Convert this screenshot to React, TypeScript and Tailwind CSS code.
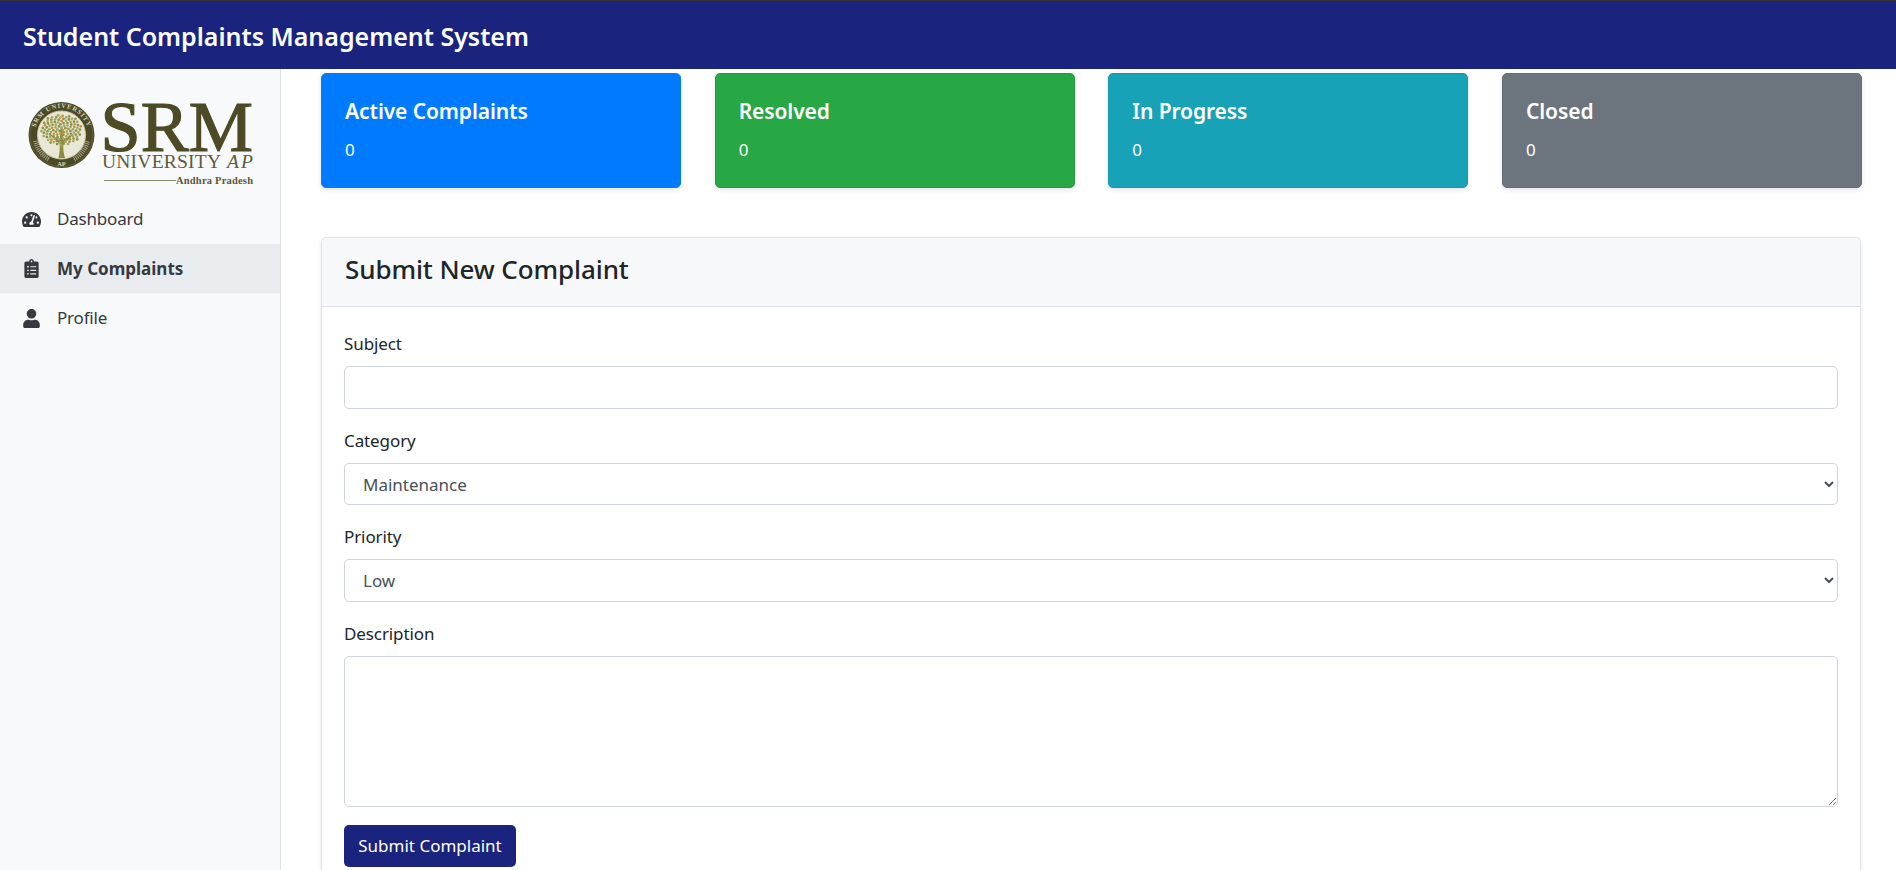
import { FaTachometerAlt, FaClipboardList, FaUser } from "react-icons/fa";

const font = "font-['Noto_Sans',sans-serif]";

function Logo() {
  const leaves: [number, number, string][] = [];
  for (let i = 0; i < 110; i++) {
    const a = i * 2.39996;
    const s = Math.sqrt((i + 0.5) / 110);
    leaves.push([
      61.5 + 20.5 * s * Math.cos(a),
      130 + 15.5 * s * Math.sin(a),
      i % 11 === 3 ? "#d08a2e" : i % 2 ? "#8d9147" : "#a3a75f",
    ]);
  }
  return (
    <svg width="280" height="107" viewBox="0 87 280 107" className="block">
      <defs>
        <path id="arcTop" d="M 34.5 135 A 27 27 0 0 1 88.5 135" />
      </defs>
      <circle cx="61.5" cy="135" r="33" fill="#4c4925" />
      <circle cx="61.5" cy="135" r="31.5" fill="none" stroke="#6d6a45" strokeWidth="0.7" />
      <circle cx="61.5" cy="135" r="24" fill="#e9e7d6" stroke="#c9c7a8" strokeWidth="1" />
      <path d="M 35.5 141 A 27 27 0 0 0 49 159" fill="none" stroke="#b9b79e" strokeWidth="5" strokeDasharray="0.8 1.2" />
      <path d="M 74 159 A 27 27 0 0 0 87.5 141" fill="none" stroke="#b9b79e" strokeWidth="5" strokeDasharray="0.8 1.2" />
      <text fontFamily="'Liberation Serif',serif" fontSize="6.5" fontWeight="bold" fill="#d8d6c0" letterSpacing="0.9">
        <textPath href="#arcTop" startOffset="50%" textAnchor="middle">SRM UNIVERSITY</textPath>
      </text>
      <text x="61.5" y="166" textAnchor="middle" fontFamily="'Liberation Serif',serif" fontSize="6.5" fontWeight="bold" fill="#d8d6c0">AP</text>
      <path d="M58.5 158 C59.8 152 60 148 59.5 144 L48 133 L60 140 L60.5 128 L62.5 128 L63 140 L75 133 L63.5 144 C63 148 63.2 152 65 158 Z" fill="#8c8b42" />
      {leaves.map(([x, y, c], i) => (
        <circle key={i} cx={x} cy={y} r="1.35" fill={c} />
      ))}
      <text x="100.5" y="150.5" fontFamily="'Liberation Serif',serif" fontSize="72" fill="#4d4a26" stroke="#4d4a26" strokeWidth="1.2" textLength="152.5" lengthAdjust="spacingAndGlyphs">SRM</text>
      <text x="102" y="168" fontFamily="'Liberation Serif',serif" fontSize="19.5" fill="#5f5c3a" textLength="119">UNIVERSITY</text>
      <text x="227" y="168" fontFamily="'Liberation Serif',serif" fontStyle="italic" fontSize="19.5" fill="#5f5c3a" textLength="26">AP</text>
      <line x1="104" y1="180.5" x2="176" y2="180.5" stroke="#8b8a6a" strokeWidth="1" />
      <text x="176" y="184" fontFamily="'Liberation Serif',serif" fontWeight="bold" fontSize="10.5" fill="#5b5836" textLength="77">Andhra Pradesh</text>
    </svg>
  );
}

function Stat({ title, bg, border }: { title: string; bg: string; border: string }) {
  return (
    <div className={`w-[360px] h-[115px] rounded-[5px] border px-[23px] pt-[22px] shadow-[0_2px_5px_rgba(0,0,0,0.1)] text-white ${bg} ${border}`}>
      <div className="text-[21px] leading-[30px] font-semibold tracking-[-0.1px]">{title}</div>
      <div className="mt-[11px] text-[17px] leading-[26px]">0</div>
    </div>
  );
}

function Field({ label, children, mb }: { label: string; children: React.ReactNode; mb: string }) {
  return (
    <div className={mb}>
      <label className="block text-[17px] leading-[24px] mb-[10px] text-[#212529] tracking-[-0.1px]">{label}</label>
      {children}
    </div>
  );
}

const control = "block w-full rounded-[5px] border border-[#ced4da] bg-white text-[17px] text-[#495057] outline-none";

export default function App() {
  return (
    <div className={`h-[870px] w-[1896px] overflow-hidden bg-white flex flex-col ${font}`}>
      <header className="h-[69px] shrink-0 bg-[#1a237e] border-t border-t-[#333333] flex items-center pl-[23px] pt-[3px]">
        <h1 className="text-[25px] font-semibold text-white">Student Complaints Management System</h1>
      </header>
      <div className="flex flex-1 min-h-0">
        <aside className="w-[281px] shrink-0 bg-[#f8f9fa] border-r border-r-[#dee2e6] pt-[18px]">
          <Logo />
          <nav className="text-[#343a40] text-[17px]">
            <a className="flex items-center h-[50px] pl-[22px]">
              <span className="w-[35px] shrink-0"><FaTachometerAlt className="h-[19px] w-auto text-[#343a40]" /></span>
              <span className="tracking-[-0.2px]">Dashboard</span>
            </a>
            <a className="flex items-center h-[49px] pl-[22px] bg-[#e9ecef] font-bold">
              <span className="w-[35px] shrink-0"><FaClipboardList className="h-[19px] w-auto text-[#343a40]" /></span>
              <span>My Complaints</span>
            </a>
            <a className="flex items-center h-[50px] pl-[22px]">
              <span className="w-[35px] shrink-0"><FaUser className="h-[19px] w-auto text-[#343a40]" /></span>
              <span className="tracking-[-0.2px]">Profile</span>
            </a>
          </nav>
        </aside>
        <main className="flex-1 pl-[40px] pr-[35px] pt-[4px]">
          <div className="flex justify-between mr-[-1px]">
            <Stat title="Active Complaints" bg="bg-[#007bff]" border="border-[#007bff]" />
            <Stat title="Resolved" bg="bg-[#28a745]" border="border-[#239a3e]" />
            <Stat title="In Progress" bg="bg-[#17a2b8]" border="border-[#1596aa]" />
            <Stat title="Closed" bg="bg-[#6c757d]" border="border-[#656e75]" />
          </div>
          <section className="mt-[49px] rounded-[5px] border border-[#dfe1e4] shadow-[0_2px_5px_rgba(0,0,0,0.08)]">
            <div className="h-[69px] bg-[#f7f8fa] border-b border-b-[#dee2e6] flex items-center pl-[23px] pb-[6px] rounded-t-[5px]">
              <h2 className="text-[26px] font-medium text-[#212529] tracking-[-0.1px]">Submit New Complaint</h2>
            </div>
            <form className="px-[22px] pt-[25px] pb-[24px]">
              <Field label="Subject" mb="mb-[20px]">
                <input className={`${control} h-[43px] px-[18px]`} />
              </Field>
              <Field label="Category" mb="mb-[20px]">
                <select className={`${control} h-[42px] px-[14px]`} defaultValue="Maintenance">
                  <option>Maintenance</option>
                </select>
              </Field>
              <Field label="Priority" mb="mb-[20px]">
                <select className={`${control} h-[43px] px-[14px]`} defaultValue="Low">
                  <option>Low</option>
                </select>
              </Field>
              <Field label="Description" mb="mb-[18px]">
                <textarea className={`${control} h-[151px] px-[18px] py-[8px]`} />
              </Field>
              <button type="button" className="block h-[42px] w-[172px] rounded-[5px] bg-[#1a237e] text-white text-[17px]">
                Submit Complaint
              </button>
            </form>
          </section>
        </main>
      </div>
    </div>
  );
}
